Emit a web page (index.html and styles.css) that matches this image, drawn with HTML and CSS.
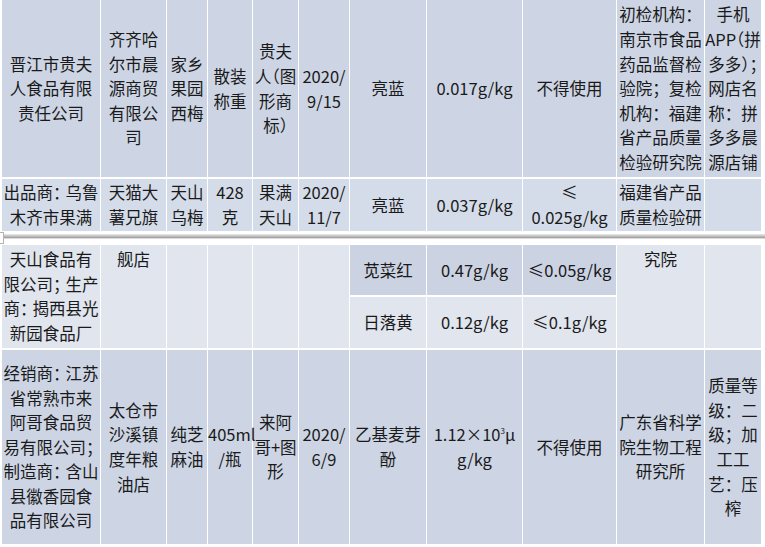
FILE: index.html
```html
<!DOCTYPE html>
<html lang="zh-CN">
<head>
<meta charset="utf-8">
<link rel="stylesheet" href="styles.css">
</head>
<body>
<div class="page">
<table class="grid grid-a">
  <colgroup>
    <col class="c1"><col class="c2"><col class="c3"><col class="c4"><col class="c5"><col class="c6"><col class="c7"><col class="c8"><col class="c9"><col class="c10"><col class="c11">
  </colgroup>
  <tr class="r1">
    <td>晋江市贵夫<br>人食品有限<br>责任公司</td>
    <td>齐齐哈<br>尔市晨<br>源商贸<br>有限公<br>司</td>
    <td>家乡<br>果园<br>西梅</td>
    <td>散装<br>称重</td>
    <td>贵夫<br>人<span class="h">（</span>图<br>形商<br>标<span class="h">）</span></td>
    <td>2020/<br>9/15</td>
    <td>亮蓝</td>
    <td>0.017g/kg</td>
    <td>不得使用</td>
    <td>初检机构：<br>南京市食品<br>药品监督检<br>验院；复检<br>机构：福建<br>省产品质量<br>检验研究院</td>
    <td>手机<br>APP<span class="h">（</span>拼<br>多多<span class="h">）；</span><br>网店名<br>称：拼<br>多多晨<br>源店铺</td>
  </tr>
  <tr class="r2">
    <td>出品商<span class="n">：</span>乌鲁<br>木齐市果满</td>
    <td>天猫大<br>薯兄旗</td>
    <td>天山<br>乌梅</td>
    <td>428<br>克</td>
    <td>果满<br>天山</td>
    <td>2020/<br>11/7</td>
    <td>亮蓝</td>
    <td>0.037g/kg</td>
    <td>≤<br>0.025g/kg</td>
    <td>福建省产品<br>质量检验研</td>
    <td></td>
  </tr>
</table>
<div class="break"><span class="mark"></span><span class="rule"></span></div>
<table class="grid grid-b">
  <colgroup>
    <col class="c1"><col class="c2"><col class="c3"><col class="c4"><col class="c5"><col class="c6"><col class="c7"><col class="c8"><col class="c9"><col class="c10"><col class="c11">
  </colgroup>
  <tr class="r3a">
    <td rowspan="2" class="top">天山食品有<br>限公司<span class="n">；</span>生产<br>商<span class="n">：</span>揭西县光<br>新园食品厂</td>
    <td rowspan="2" class="top">舰店</td>
    <td rowspan="2"></td>
    <td rowspan="2"></td>
    <td rowspan="2"></td>
    <td rowspan="2"></td>
    <td class="dk">苋菜红</td>
    <td class="dk">0.47g/kg</td>
    <td class="dk">≤0.05g/kg</td>
    <td rowspan="2" class="top">究院</td>
    <td rowspan="2"></td>
  </tr>
  <tr class="r3b">
    <td>日落黄</td>
    <td>0.12g/kg</td>
    <td>≤0.1g/kg</td>
  </tr>
  <tr class="r4">
    <td>经销商<span class="n">：</span>江苏<br>省常熟市来<br>阿哥食品贸<br>易有限公司<span class="n">；</span><br>制造商<span class="n">：</span>含山<br>县徽香园食<br>品有限公司</td>
    <td>太仓市<br>沙溪镇<br>度年粮<br>油店</td>
    <td>纯芝<br>麻油</td>
    <td>405ml<br>/瓶</td>
    <td>来阿<br>哥+图<br>形</td>
    <td>2020/<br>6/9</td>
    <td>乙基麦芽<br>酚</td>
    <td>1.12×10<sup>3</sup>μ<br>g/kg</td>
    <td>不得使用</td>
    <td>广东省科学<br>院生物工程<br>研究所</td>
    <td>质量等<br>级：二<br>级；加<br>工工<br>艺：压<br>榨</td>
  </tr>
</table>
</div>
</body>
</html>
```

FILE: styles.css
```css
html, body {
  margin: 0;
  padding: 0;
  background: #ffffff;
}

.page {
  width: 765px;
  height: 547px;
  overflow: hidden;
  font-family: "Noto Sans CJK SC", "Noto Sans", sans-serif;
  font-size: 16.5px;
  line-height: 24.6px;
  color: #1a1a1a;
}

.grid {
  table-layout: fixed;
  border-collapse: separate;
  border-spacing: 1px 2px;
  width: 761px;
  margin-left: 1px;
  background: #ffffff;
}

.grid-a {
  margin-top: -2px;
}

.grid td {
  padding: 0;
  text-align: center;
  vertical-align: middle;
  white-space: nowrap;
  overflow: visible;
}

.c1 { width: 98px; }
.c2 { width: 65px; }
.c3 { width: 40px; }
.c4 { width: 44px; }
.c5 { width: 45px; }
.c6 { width: 50px; }
.c7 { width: 76px; }
.c8 { width: 95px; }
.c9 { width: 93px; }
.c10 { width: 87px; }
.c11 { width: 56px; }

.r1 { height: 177px; }
.r1 td { background: #cdd5e5; }

.r2 { height: 52px; }
.r2 td { background: #d5dce9; }

.r3a { height: 50px; }
.r3b { height: 51px; }
.r3a td, .r3b td { background: #e0e5ee; }
.r3a td.dk { background: #cbd3e3; }
.grid td.top {
  vertical-align: top;
  padding-top: 2px;
}

.r4 { height: 194px; }
.r4 td { background: #cdd5e5; }

.h {
  font-feature-settings: "halt";
}

.n {
  letter-spacing: -4px;
}

sup {
  font-size: 8px;
  line-height: 0;
  vertical-align: 7px;
}

.break {
  height: 10px;
  display: flex;
  align-items: flex-start;
}

.break .mark {
  width: 3px;
  height: 10px;
  border: 1px solid #b4b4b4;
  border-left: none;
  margin-top: -1px;
  flex: none;
}

.break .rule {
  flex: 1;
  height: 4px;
  margin-top: 1px;
  background: linear-gradient(#ececec, #c4c4c4 50%, #9c9c9c);
  border-bottom: 1px solid #dadada;
}
```
